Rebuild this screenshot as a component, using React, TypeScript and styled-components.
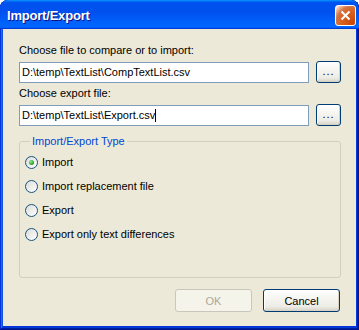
import styled, { createGlobalStyle } from "styled-components";

const GlobalStyle = createGlobalStyle`
  html, body {
    margin: 0;
    padding: 0;
    background: #ffffff;
  }
  body {
    font-family: "Liberation Sans", Arial, sans-serif;
    font-size: 11px;
  }
`;

const Window = styled.div`
  width: 359px;
  height: 330px;
  box-sizing: border-box;
  display: flex;
  flex-direction: column;
  border-radius: 8px 8px 0 0;
  background: #0831d9;
  box-shadow: inset -1px -1px #00138c, inset 1px 1px #0831d9,
    inset -2px -2px #001ea0, inset 2px 2px #166aee, inset -3px -3px #003bda,
    inset 3px 3px #0855dd;
  padding-bottom: 4px;
  overflow: hidden;
`;

const TitleBar = styled.div`
  height: 29px;
  flex-shrink: 0;
  display: flex;
  align-items: center;
  justify-content: space-between;
  padding: 0 3px 0 7px;
  border-radius: 8px 8px 0 0;
  background: linear-gradient(
    180deg,
    #0997ff,
    #0053ee 8%,
    #0050ee 40%,
    #0066ff 88%,
    #0066ff 93%,
    #005bff 95%,
    #003dd7 96%,
    #003dd7
  );
`;

const TitleText = styled.div`
  color: #ffffff;
  font-family: "Liberation Sans", Arial, sans-serif;
  font-weight: bold;
  font-size: 13px;
  letter-spacing: -0.2px;
  text-shadow: 1px 1px #0f1089;
  padding-top: 1px;
`;

const CloseButton = styled.div`
  width: 21px;
  height: 21px;
  box-sizing: border-box;
  border: 1px solid #ffffff;
  border-radius: 3px;
  display: flex;
  align-items: center;
  justify-content: center;
  background: radial-gradient(
    circle at 90% 90%,
    #cc4600 0,
    #dc6527 55%,
    #cd7546 70%,
    #ffccb2 90%,
    #ffffff 100%
  );
  margin-top: 1px;
`;

const Client = styled.div`
  flex: 1;
  margin: 0 3px;
  background: #ece9d8;
  display: flex;
  flex-direction: column;
  padding: 15px 15px 14px 16px;
  color: #000000;
`;

const Label = styled.div`
  line-height: 13px;
  margin-bottom: 4px;
`;

const FileRow = styled.div<{ $gap: number }>`
  display: grid;
  grid-template-columns: 1fr 25px;
  column-gap: 7px;
  align-items: center;
  margin-bottom: ${(p) => p.$gap}px;
`;

const TextBox = styled.div`
  height: 21px;
  box-sizing: border-box;
  border: 1px solid #7f9db9;
  background: #ffffff;
  display: flex;
  align-items: center;
  padding-left: 2px;
  white-space: nowrap;
  overflow: hidden;
`;

const Caret = styled.span`
  display: inline-block;
  width: 1px;
  height: 13px;
  background: #000000;
`;

const XpButton = styled.div<{ $disabled?: boolean }>`
  box-sizing: border-box;
  border: 1px solid ${(p) => (p.$disabled ? "#c9c7ba" : "#003c74")};
  border-radius: 3px;
  display: flex;
  align-items: center;
  justify-content: center;
  color: ${(p) => (p.$disabled ? "#aca899" : "#000000")};
  background: ${(p) =>
    p.$disabled
      ? "#f5f4ea"
      : "linear-gradient(180deg, #ffffff, #f5f4ef 45%, #ecebe4 80%, #d6d0c5)"};
  box-shadow: ${(p) =>
    p.$disabled ? "none" : "inset -1px -1px #d8d2c6, inset 1px 1px #ffffff"};
`;

const BrowseButton = styled(XpButton)`
  height: 22px;
  letter-spacing: 1px;
  padding-bottom: 3px;
`;

const GroupBox = styled.fieldset`
  flex: 1;
  margin: 0 0 11px 0;
  padding: 2px 0 0 5px;
  border: 1px solid #d0d0bf;
  border-radius: 3px;
  display: flex;
  flex-direction: column;
  min-width: 0;
`;

const Legend = styled.legend`
  color: #0046d5;
  padding: 0 2px;
  margin-left: 5px;
  line-height: 13px;
`;

const RadioRow = styled.div`
  height: 24px;
  display: flex;
  align-items: center;
  gap: 4px;
`;

const RadioCircle = styled.span<{ $checked?: boolean }>`
  width: 13px;
  height: 13px;
  box-sizing: border-box;
  border-radius: 50%;
  border: 1px solid #1c5180;
  background: linear-gradient(135deg, #dcdcd7, #ffffff);
  display: flex;
  align-items: center;
  justify-content: center;

  &::after {
    content: "";
    display: ${(p) => (p.$checked ? "block" : "none")};
    width: 5px;
    height: 5px;
    border-radius: 50%;
    background: radial-gradient(circle at 35% 35%, #8ee88b, #21a121 70%);
  }
`;

const ButtonRow = styled.div`
  display: flex;
  justify-content: flex-end;
  gap: 11px;
  padding-right: 1px;
`;

const DialogButton = styled(XpButton)`
  width: 77px;
  height: 23px;
`;

const options = [
  { label: "Import", checked: true },
  { label: "Import replacement file" },
  { label: "Export" },
  { label: "Export only text differences" },
];

export default function App() {
  return (
    <>
      <GlobalStyle />
      <Window>
        <TitleBar>
          <TitleText>Import/Export</TitleText>
          <CloseButton>
            <svg width="11" height="11" viewBox="0 0 11 11">
              <path
                d="M1.5 1.5 L9.5 9.5 M9.5 1.5 L1.5 9.5"
                stroke="#ffffff"
                strokeWidth="2"
              />
            </svg>
          </CloseButton>
        </TitleBar>
        <Client>
          <Label>Choose file to compare or to import:</Label>
          <FileRow $gap={4}>
            <TextBox>D:\temp\TextList\CompTextList.csv</TextBox>
            <BrowseButton>...</BrowseButton>
          </FileRow>
          <Label>Choose export file:</Label>
          <FileRow $gap={9}>
            <TextBox>
              D:\temp\TextList\Export.csv
              <Caret />
            </TextBox>
            <BrowseButton>...</BrowseButton>
          </FileRow>
          <GroupBox>
            <Legend>Import/Export Type</Legend>
            {options.map((o) => (
              <RadioRow key={o.label}>
                <RadioCircle $checked={o.checked} />
                {o.label}
              </RadioRow>
            ))}
          </GroupBox>
          <ButtonRow>
            <DialogButton $disabled>OK</DialogButton>
            <DialogButton>Cancel</DialogButton>
          </ButtonRow>
        </Client>
      </Window>
    </>
  );
}
